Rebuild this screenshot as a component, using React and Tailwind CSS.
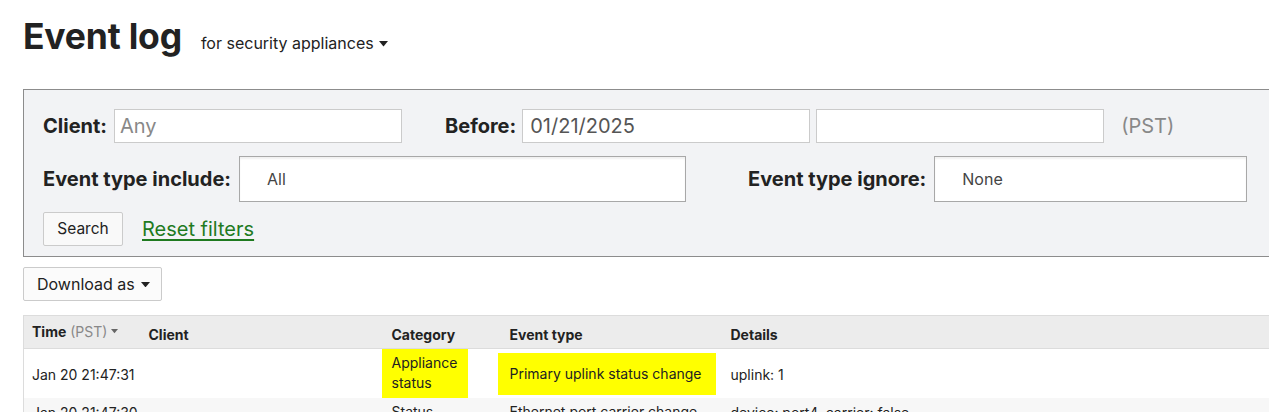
import React from "react";

const Caret = ({ className = "" }) => (
  <svg viewBox="0 0 10 6" className={className} fill="currentColor">
    <path d="M0 0h10L5 6z" />
  </svg>
);

const Highlight = ({ children, className = "" }) => (
  <span className={"inline-block bg-[#ffff00] " + className}>{children}</span>
);

const rows = [
  {
    time: "Jan 20 21:47:31",
    client: "",
    category: "Appliance status",
    type: "Primary uplink status change",
    details: "uplink: 1",
    marked: true,
  },
  {
    time: "Jan 20 21:47:30",
    client: "",
    category: "Status",
    type: "Ethernet port carrier change",
    details: "device: port4, carrier: false",
  },
];

export default function App() {
  return (
    <div className="h-[412px] w-[1269px] overflow-hidden bg-white pl-[23px] font-['Inter',sans-serif] text-[#222]">
      {/* title */}
      <div className="flex items-baseline pt-[14px]">
        <h1 className="text-[35.5px] font-bold leading-[46px] tracking-[-0.2px]">Event log</h1>
        <button className="ml-[19px] flex items-center gap-[5px] text-[16px]">
          for security appliances
          <Caret className="mt-[2px] w-[9px]" />
        </button>
      </div>

      {/* filters */}
      <div className="mt-[29px] w-[1270px] border border-[#8c8c8c] bg-[#f2f3f5] pb-[10px] pl-[19px] pt-[19px]">
        <div className="flex items-center">
          <label className="text-[20px] font-bold">Client:</label>
          <input
            className="ml-[7px] h-[34px] w-[288px] border border-[#cbcbcb] bg-white px-[5px] text-[20px] placeholder:text-[#888] outline-none"
            placeholder="Any"
          />
          <label className="ml-[43px] text-[20px] font-bold">Before:</label>
          <input
            className="ml-[6px] h-[34px] w-[288px] border border-[#cbcbcb] bg-white px-[7px] text-[20px] text-[#555] outline-none"
            defaultValue="01/21/2025"
          />
          <input className="ml-[6px] h-[34px] w-[288px] border border-[#cbcbcb] bg-white outline-none" />
          <span className="ml-[17px] text-[20px] text-[#888]">(PST)</span>
        </div>

        <div className="mt-[13px] flex items-center">
          <label className="text-[20px] font-bold">Event type include:</label>
          <div className="ml-[8px] flex h-[46px] w-[447px] items-center border border-[#a8a8a8] bg-white pl-[27px] text-[16px] text-[#444] shadow-[inset_0_2px_2px_rgba(0,0,0,0.06)]">
            All
          </div>
          <label className="ml-[62px] text-[20px] font-bold">Event type ignore:</label>
          <div className="ml-[8px] flex h-[46px] w-[313px] items-center border border-[#a8a8a8] bg-white pl-[27px] text-[16px] text-[#444] shadow-[inset_0_2px_2px_rgba(0,0,0,0.06)]">
            None
          </div>
        </div>

        <div className="mt-[10px] flex items-center">
          <button className="h-[34px] w-[80px] rounded-[2px] border border-[#cbcbcb] bg-[#f9f9f9] text-[15.5px]">
            Search
          </button>
          <a className="ml-[19px] text-[20px] text-[#1f7a1f] underline decoration-2 underline-offset-[3px]">
            Reset filters
          </a>
        </div>
      </div>

      {/* download */}
      <button className="mt-[10px] flex h-[34px] w-[139px] items-center gap-[6px] rounded-[2px] border border-[#cbcbcb] bg-[#fbfbfb] pl-[13px] text-[16px]">
        Download as
        <Caret className="mt-[1px] w-[9px]" />
      </button>

      {/* table */}
      <table className="mt-[14px] w-[1270px] table-fixed border-collapse border-l border-[#dcdcdc] text-[14px]">
        <colgroup>
          <col className="w-[117px]" />
          <col className="w-[243px]" />
          <col className="w-[118px]" />
          <col className="w-[221px]" />
          <col />
        </colgroup>
        <thead>
          <tr className="h-[33px] border-y border-[#dcdcdc] bg-[#ececec] text-left">
            <th className="px-[8px] pb-[1px] font-bold">
              <span className="flex items-center whitespace-nowrap">
                Time <span className="ml-[4px] text-[14px] font-normal text-[#888]">(PST)</span>
                <Caret className="ml-[4px] w-[7px] text-[#666]" />
              </span>
            </th>
            <th className="px-[8px] pt-[5px] font-bold">Client</th>
            <th className="px-[8px] pt-[5px] font-bold">Category</th>
            <th className="px-[8px] pt-[5px] font-bold">Event type</th>
            <th className="px-[8px] pt-[5px] font-bold">Details</th>
          </tr>
        </thead>
        <tbody>
          {rows.map((r, i) => (
            <tr key={i} className={i % 2 ? "bg-[#f7f7f7]" : "h-[49px] bg-white"}>
              <td className={"whitespace-nowrap px-[8px] " + (r.marked ? "pt-[2px]" : "pt-[4px] align-top")}>{r.time}</td>
              <td className="px-[8px]">{r.client}</td>
              <td className="px-[8px] align-top leading-[20px]">
                {r.marked ? (
                  <Highlight className="-ml-[10px] w-[86px] pb-[5px] pl-[10px] pt-[4px]">{r.category}</Highlight>
                ) : (
                  <span className="block pt-[4px]">{r.category}</span>
                )}
              </td>
              <td className="px-[8px] align-top leading-[20px]">
                {r.marked ? (
                  <Highlight className="-ml-[12px] mt-[4px] w-[218px] py-[11px] pl-[12px]">{r.type}</Highlight>
                ) : (
                  <span className="block whitespace-nowrap pt-[4px]">{r.type}</span>
                )}
              </td>
              <td className={"whitespace-nowrap px-[8px] " + (r.marked ? "pt-[2px]" : "pt-[4px] align-top")}>{r.details}</td>
            </tr>
          ))}
        </tbody>
      </table>
    </div>
  );
}
